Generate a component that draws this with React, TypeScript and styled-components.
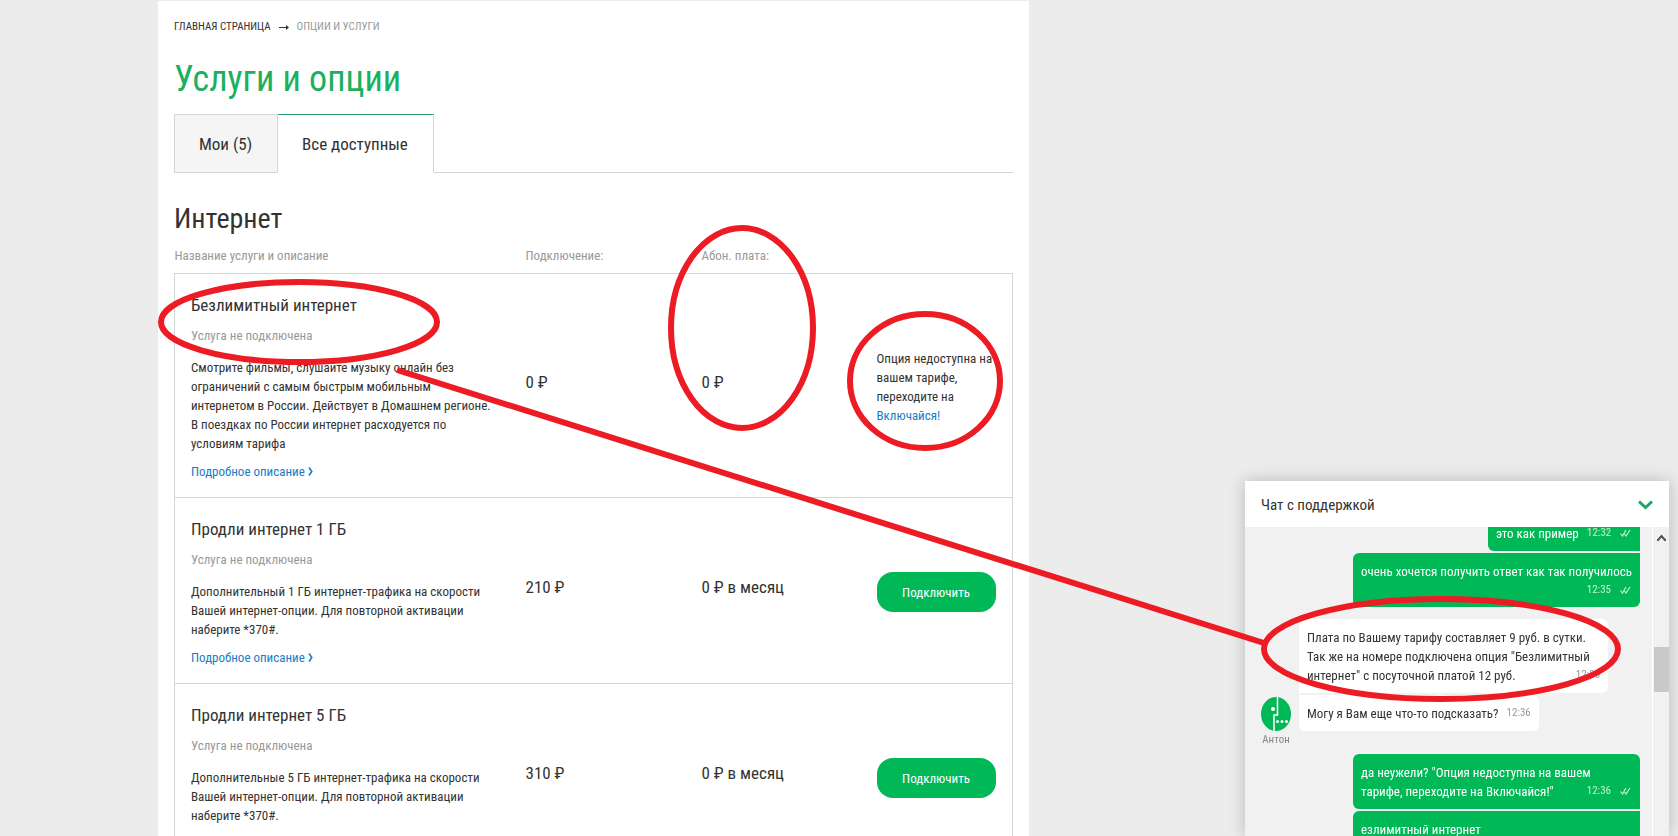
import React from "react";
import styled, { createGlobalStyle } from "styled-components";

const GlobalStyle = createGlobalStyle`
  * { box-sizing: border-box; }
  body {
    margin: 0;
    background: #ececec;
    color: #333;
    font-family: "Roboto Condensed", Roboto, sans-serif;
    font-size: 13px;
    line-height: 19px;
  }
  button { font-family: inherit; }
`;

const Page = styled.div`
  position: relative;
  height: 100vh;
  overflow: hidden;
  padding: 1px 0 0 158px;
`;

const Content = styled.main`
  max-width: 871px;
  min-height: 100%;
  padding: 16px;
  background: #fff;
`;

const Breadcrumbs = styled.nav`
  display: flex;
  gap: 8px;
  font-size: 11px;
  line-height: 20px;
  text-transform: uppercase;
  color: #999;

  a {
    color: #333;
    text-decoration: none;
  }
`;

const Title = styled.h1`
  margin: 19px 0 12px;
  font-size: 36px;
  line-height: 46px;
  font-weight: 400;
  color: #1caf5e;
`;

const Tabs = styled.div`
  display: flex;
  height: 59px;
  border-bottom: 1px solid #d5d5d5;
`;

const Tab = styled.button<{ $active?: boolean }>`
  height: 59px;
  padding: 0 25px 0 24px;
  border: 1px solid #d5d5d5;
  border-left-width: ${(p) => (p.$active ? 0 : 1)}px;
  border-top-color: ${(p) => (p.$active ? "#2d9c6b" : "#d5d5d5")};
  border-bottom-color: ${(p) => (p.$active ? "#fff" : "#d5d5d5")};
  background: ${(p) => (p.$active ? "#fff" : "#f5f5f5")};
  color: #333;
  font-size: 17px;
`;

const SectionTitle = styled.h2`
  margin: 28px 0 9px;
  font-size: 28px;
  line-height: 36px;
  font-weight: 400;
`;

const Services = styled.table`
  width: 100%;
  table-layout: fixed;
  border-collapse: collapse;
  text-align: left;
`;

const HeadCell = styled.th<{ $width?: number }>`
  width: ${(p) => (p.$width ? `${p.$width}px` : "auto")};
  padding: 0 0 8px;
  font-weight: 400;
  color: #999;
`;

const Row = styled.tr`
  border: 1px solid #d5d5d5;
`;

const InfoCell = styled.td`
  padding: 19px 16px 16px;
`;

const PriceCell = styled.td`
  padding: 0 0 6px;
  font-size: 17px;
`;

const ActionCell = styled.td`
  padding: 2px 0 0;
`;

const Name = styled.h3`
  margin: 0;
  font-size: 17px;
  line-height: 24px;
  font-weight: 400;
`;

const Status = styled.p`
  margin: 9px 0 13px;
  color: #999;
`;

const Description = styled.p`
  margin: 0 0 9px;
  white-space: pre-line;
`;

const TextLink = styled.a`
  color: #1a7cc4;
  text-decoration: none;
`;

const ConnectButton = styled.button`
  display: block;
  width: 119px;
  height: 40px;
  padding: 2px 0 0;
  border: 0;
  border-radius: 16px;
  background: #00b956;
  color: #fff;
  font-size: 13px;
`;

const Chat = styled.aside`
  position: fixed;
  right: 9px;
  bottom: 0;
  display: flex;
  flex-direction: column;
  width: 424px;
  height: 355px;
  background: #f1f1f1;
  box-shadow: 0 0 16px rgba(0, 0, 0, 0.22);
`;

const ChatHeader = styled.header`
  display: flex;
  flex: none;
  align-items: center;
  justify-content: space-between;
  height: 46px;
  padding: 2px 16px 0;
  background: #fff;
  font-size: 15px;
`;

const CollapseButton = styled.button`
  display: flex;
  padding: 0;
  border: 0;
  background: none;
`;

const ChatBody = styled.div`
  display: flex;
  flex: 1;
  min-height: 0;
  overflow: hidden;
`;

const Messages = styled.div`
  display: flex;
  flex: 1;
  flex-direction: column;
  gap: 2px;
  margin-top: -12px;
  padding: 0 12px 0 16px;
`;

const Bubble = styled.div<{ $own?: boolean; $wide?: boolean; $radius: string }>`
  flex: none;
  width: ${(p) => (p.$wide ? (p.$own ? "287px" : "309px") : "auto")};
  padding: 9px 8px 8px;
  border-radius: ${(p) => p.$radius};
  background: ${(p) => (p.$own ? "#00b956" : "#fff")};
  color: ${(p) => (p.$own ? "#fff" : "#333")};
  align-self: ${(p) => (p.$own ? "flex-end" : "flex-start")};
  justify-self: start;
  white-space: pre-line;

  &::after {
    content: "";
    display: block;
    clear: both;
  }
`;

const Time = styled.time<{ $own?: boolean }>`
  display: flex;
  float: right;
  align-items: center;
  gap: 9px;
  margin-left: 8px;
  padding-right: ${(p) => (p.$own ? 1 : 0)}px;
  font-size: 11px;
  line-height: 18px;
  color: ${(p) => (p.$own ? "#c5f0d6" : "#999")};
`;

const SupportGroup = styled.div`
  display: grid;
  grid-template-columns: 30px 1fr;
  gap: 2px 8px;
  align-items: end;
  margin: 10px 0 5px;

  > :first-child {
    grid-column: 2;
  }
`;

const AgentName = styled.span`
  font-size: 11px;
  line-height: 14px;
  color: #888;
  text-align: center;
`;

const Scrollbar = styled.div`
  display: flex;
  flex-direction: column;
  align-items: center;
  width: 17px;
  padding-top: 7px;
  border-left: 1px solid #fff;
`;

const Thumb = styled.div`
  width: 15px;
  height: 45px;
  margin-top: 105px;
  background: #c9c9c9;
`;

const Notes = styled.svg`
  position: absolute;
  top: 0;
  left: 0;
  pointer-events: none;
  z-index: 2;
`;

const LongArrow = () => (
  <svg width="10" height="20" viewBox="0 0 10 20" fill="none" stroke="#333" aria-hidden="true">
    <path d="M0 10.500H9" />
    <path d="M7 8 10 10.500 7 13Z" fill="#333" stroke="none" />
  </svg>
);

const Checks = () => (
  <svg width="11" height="8" viewBox="0 0 11 8" fill="none" stroke="#c5f0d6" strokeWidth="1.200">
    <path d="M0.500 4.500 2.500 7 6 1M4.500 5 6 7 10 1" />
  </svg>
);

const Avatar = () => (
  <svg width="30" height="34" viewBox="0 0 30 34" aria-hidden="true">
    <ellipse cx="15" cy="17" rx="15" ry="17" fill="#00b956" />
    <path d="M16.500 0V18H13V34" fill="none" stroke="#fff" strokeWidth="1.500" />
    <circle cx="12" cy="12" r="2" fill="#fff" />
    <circle cx="16.500" cy="24.500" r="1.500" fill="#fff" />
    <circle cx="21" cy="24.500" r="1.500" fill="#fff" />
    <circle cx="25.500" cy="24.500" r="1.500" fill="#fff" />
  </svg>
);

type Service = {
  name: string;
  text: string;
  connect: string;
  fee: string;
  available: boolean;
};

const services: Service[] = [
  {
    name: "Безлимитный интернет",
    text: "Смотрите фильмы, слушайте музыку онлайн без\nограничений с самым быстрым мобильным\nинтернетом в России. Действует в Домашнем регионе.\nВ поездках по России интернет расходуется по\nусловиям тарифа",
    connect: "0 ₽",
    fee: "0 ₽",
    available: false,
  },
  {
    name: "Продли интернет 1 ГБ",
    text: "Дополнительный 1 ГБ интернет-трафика на скорости\nВашей интернет-опции. Для повторной активации\nнаберите *370#.",
    connect: "210 ₽",
    fee: "0 ₽ в месяц",
    available: true,
  },
  {
    name: "Продли интернет 5 ГБ",
    text: "Дополнительные 5 ГБ интернет-трафика на скорости\nВашей интернет-опции. Для повторной активации\nнаберите *370#.",
    connect: "310 ₽",
    fee: "0 ₽ в месяц",
    available: true,
  },
];

const ServiceRow = ({ service }: { service: Service }) => (
  <Row>
    <InfoCell>
      <Name>{service.name}</Name>
      <Status>Услуга не подключена</Status>
      <Description>{service.text}</Description>
      <TextLink href="#">
        Подробное описание{" "}
        <svg width="5" height="9" viewBox="0 0 5 9" fill="none" stroke="#1a7cc4" strokeWidth="1.600">
          <path d="M1 0.500 3.800 4.500 1 8.500" />
        </svg>
      </TextLink>
    </InfoCell>
    <PriceCell>{service.connect}</PriceCell>
    <PriceCell>{service.fee}</PriceCell>
    <ActionCell>
      {service.available ? (
        <ConnectButton>Подключить</ConnectButton>
      ) : (
        <>
          Опция недоступна на
          <br />
          вашем тарифе,
          <br />
          переходите на
          <br />
          <TextLink href="#">Включайся!</TextLink>
        </>
      )}
    </ActionCell>
  </Row>
);

export default function App() {
  return (
    <Page>
      <GlobalStyle />
      <Content>
        <Breadcrumbs>
          <a href="#">Главная страница</a>
          <LongArrow />
          <span>Опции и услуги</span>
        </Breadcrumbs>
        <Title>Услуги и опции</Title>
        <Tabs>
          <Tab>Мои (5)</Tab>
          <Tab $active>Все доступные</Tab>
        </Tabs>
        <SectionTitle>Интернет</SectionTitle>
        <Services>
          <thead>
            <tr>
              <HeadCell $width={351}>Название услуги и описание</HeadCell>
              <HeadCell $width={176}>Подключение:</HeadCell>
              <HeadCell $width={175}>Абон. плата:</HeadCell>
              <HeadCell aria-label="Действие" />
            </tr>
          </thead>
          <tbody>
            {services.map((s) => (
              <ServiceRow key={s.name} service={s} />
            ))}
          </tbody>
        </Services>
      </Content>

      <Chat>
        <ChatHeader>
          Чат с поддержкой
          <CollapseButton aria-label="Свернуть чат">
            <svg width="15" height="10" viewBox="0 0 15 10" fill="none" stroke="#1fa463" strokeWidth="3">
              <path d="M1 1.500 7.500 7.500 14 1.500" />
            </svg>
          </CollapseButton>
        </ChatHeader>
        <ChatBody>
          <Messages>
            <Bubble $own $radius="6px 0 0 6px">
              это как пример
              <Time $own>
                12:32
                <Checks />
              </Time>
            </Bubble>
            <Bubble $own $wide $radius="6px 0 6px 6px">
              очень хочется получить ответ как так получилось
              <Time $own>
                12:35
                <Checks />
              </Time>
            </Bubble>
            <SupportGroup>
              <Bubble $wide $radius="0 6px 6px 0">
                {'Плата по Вашему тарифу составляет 9 руб. в сутки.\nТак же на номере подключена опция "Безлимитный\nинтернет" с посуточной платой 12 руб.'}
                <Time>12:36</Time>
              </Bubble>
              <Avatar />
              <Bubble $radius="0 6px 6px 6px">
                Могу я Вам еще что-то подсказать?
                <Time>12:36</Time>
              </Bubble>
              <AgentName>Антон</AgentName>
            </SupportGroup>
            <Bubble $own $wide $radius="6px 6px 0 6px">
              {'да неужели? "Опция недоступна на вашем\nтарифе, переходите на Включайся!"'}
              <Time $own>
                12:36
                <Checks />
              </Time>
            </Bubble>
            <Bubble $own $wide $radius="6px 0 0 6px">
              езлимитный интернет
            </Bubble>
          </Messages>
          <Scrollbar>
            <svg width="9" height="8" viewBox="0 0 9 8" fill="none" stroke="#555" strokeWidth="2">
              <path d="M1 7V6L4.500 2 8 6V7" />
            </svg>
            <Thumb />
          </Scrollbar>
        </ChatBody>
      </Chat>

      <Notes width="1678" height="836" viewBox="0 0 1678 836" fill="none" stroke="#ed1c24" strokeWidth="6">
        <ellipse cx="299" cy="322" rx="138" ry="40" />
        <ellipse cx="742" cy="328" rx="71" ry="100" />
        <ellipse cx="925" cy="381" rx="75" ry="67" />
        <ellipse cx="1441" cy="649" rx="177" ry="50" />
        <path d="M397 370 1264 643" />
      </Notes>
    </Page>
  );
}
